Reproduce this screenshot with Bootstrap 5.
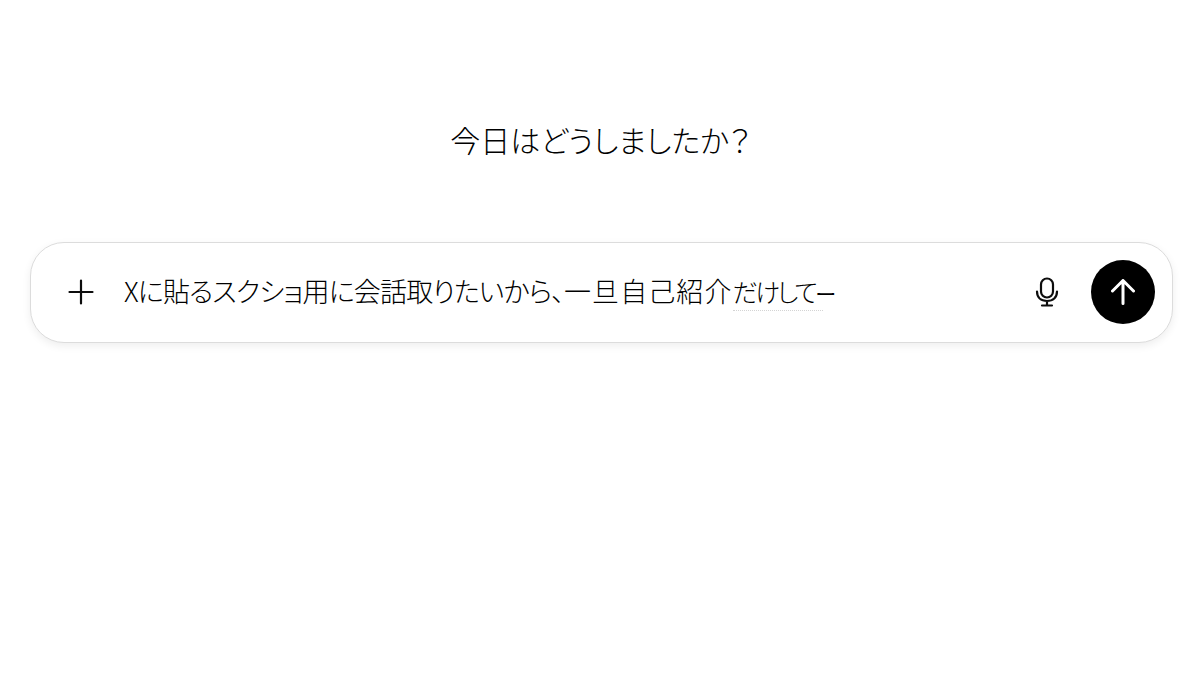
<!DOCTYPE html>
<html lang="ja"><head><meta charset="utf-8">
<link href="https://cdn.jsdelivr.net/npm/bootstrap@5.3.0/dist/css/bootstrap.min.css" rel="stylesheet">
<style>
html,body{height:681px;overflow:hidden;background:#fff}
body{font-family:"Noto Sans CJK JP","Liberation Sans",sans-serif;color:#0d0d0d}
.page-wrap{padding:0 27px 0 30px}
.title-zone{height:242px;padding-bottom:83px}
.hello{font-size:30px;line-height:40px;font-weight:300;font-feature-settings:"palt";letter-spacing:0;margin:0 0 0 -2px;color:#000}
.composer{height:101px;border:1px solid #dcdcdc;border-radius:34px;box-shadow:0 3px 8px rgba(0,0,0,.07);padding:0 17px 2px 37px;background:#fff}
.plus-slot{width:56px}
.msg{font-size:27px;font-weight:300;font-feature-settings:"palt";letter-spacing:-.85px;line-height:40px;white-space:nowrap;color:#000;padding-top:1px}
.kanji-run{letter-spacing:1.1px}
.squiggle{position:relative;font-size:25px;letter-spacing:-2.6px}
.squiggle::after{content:"";position:absolute;left:0;right:-8px;bottom:-2px;border-bottom:1px dotted #d4d4d4}
.long-mark{font-size:21px;font-weight:400}
.send{width:64px;height:64px;background:#000;border:0;border-radius:50%;padding:0}
.mic-slot{margin-right:32px}
</style></head>
<body>
<div class="page-wrap">
<div class="title-zone d-flex align-items-end justify-content-center"><h1 class="hello">今日はどうしましたか？</h1></div>
<div class="composer d-flex align-items-center">
<div class="plus-slot flex-shrink-0 d-flex"><svg width="26" height="26" viewBox="0 0 26 26" fill="none" stroke="#0d0d0d" stroke-width="2.2" stroke-linecap="round"><path d="M13 1.500v23M1.500 13h23"/></svg></div>
<div class="msg flex-grow-1">Xに貼るスクショ用に会話取りたいから、<span class="kanji-run">一旦自己紹介</span><span class="squiggle">だけして</span><span class="long-mark">ー</span></div>
<div class="mic-slot d-flex"><svg width="24" height="30" viewBox="0 0 24 30" fill="none" stroke="#0d0d0d" stroke-width="2.2" stroke-linecap="round"><rect x="6" y="1.500" width="12" height="19" rx="6"/><path d="M2 14.500c0 6 4 9.500 10 9.500s10-3.500 10-9.500M12 24v4.500M7 28.500h10"/></svg></div>
<button class="send btn d-flex align-items-center justify-content-center flex-shrink-0" aria-label="送信"><svg width="24" height="26" viewBox="0 0 24 26" fill="none" stroke="#fff" stroke-width="3" stroke-linecap="round" stroke-linejoin="round"><path d="M12 24.500V1.500M1.500 12L12 1.500 22.500 12"/></svg></button>
</div>
</div>
<script src="https://cdn.jsdelivr.net/npm/bootstrap@5.3.0/dist/js/bootstrap.bundle.min.js"></script>
</body></html>
